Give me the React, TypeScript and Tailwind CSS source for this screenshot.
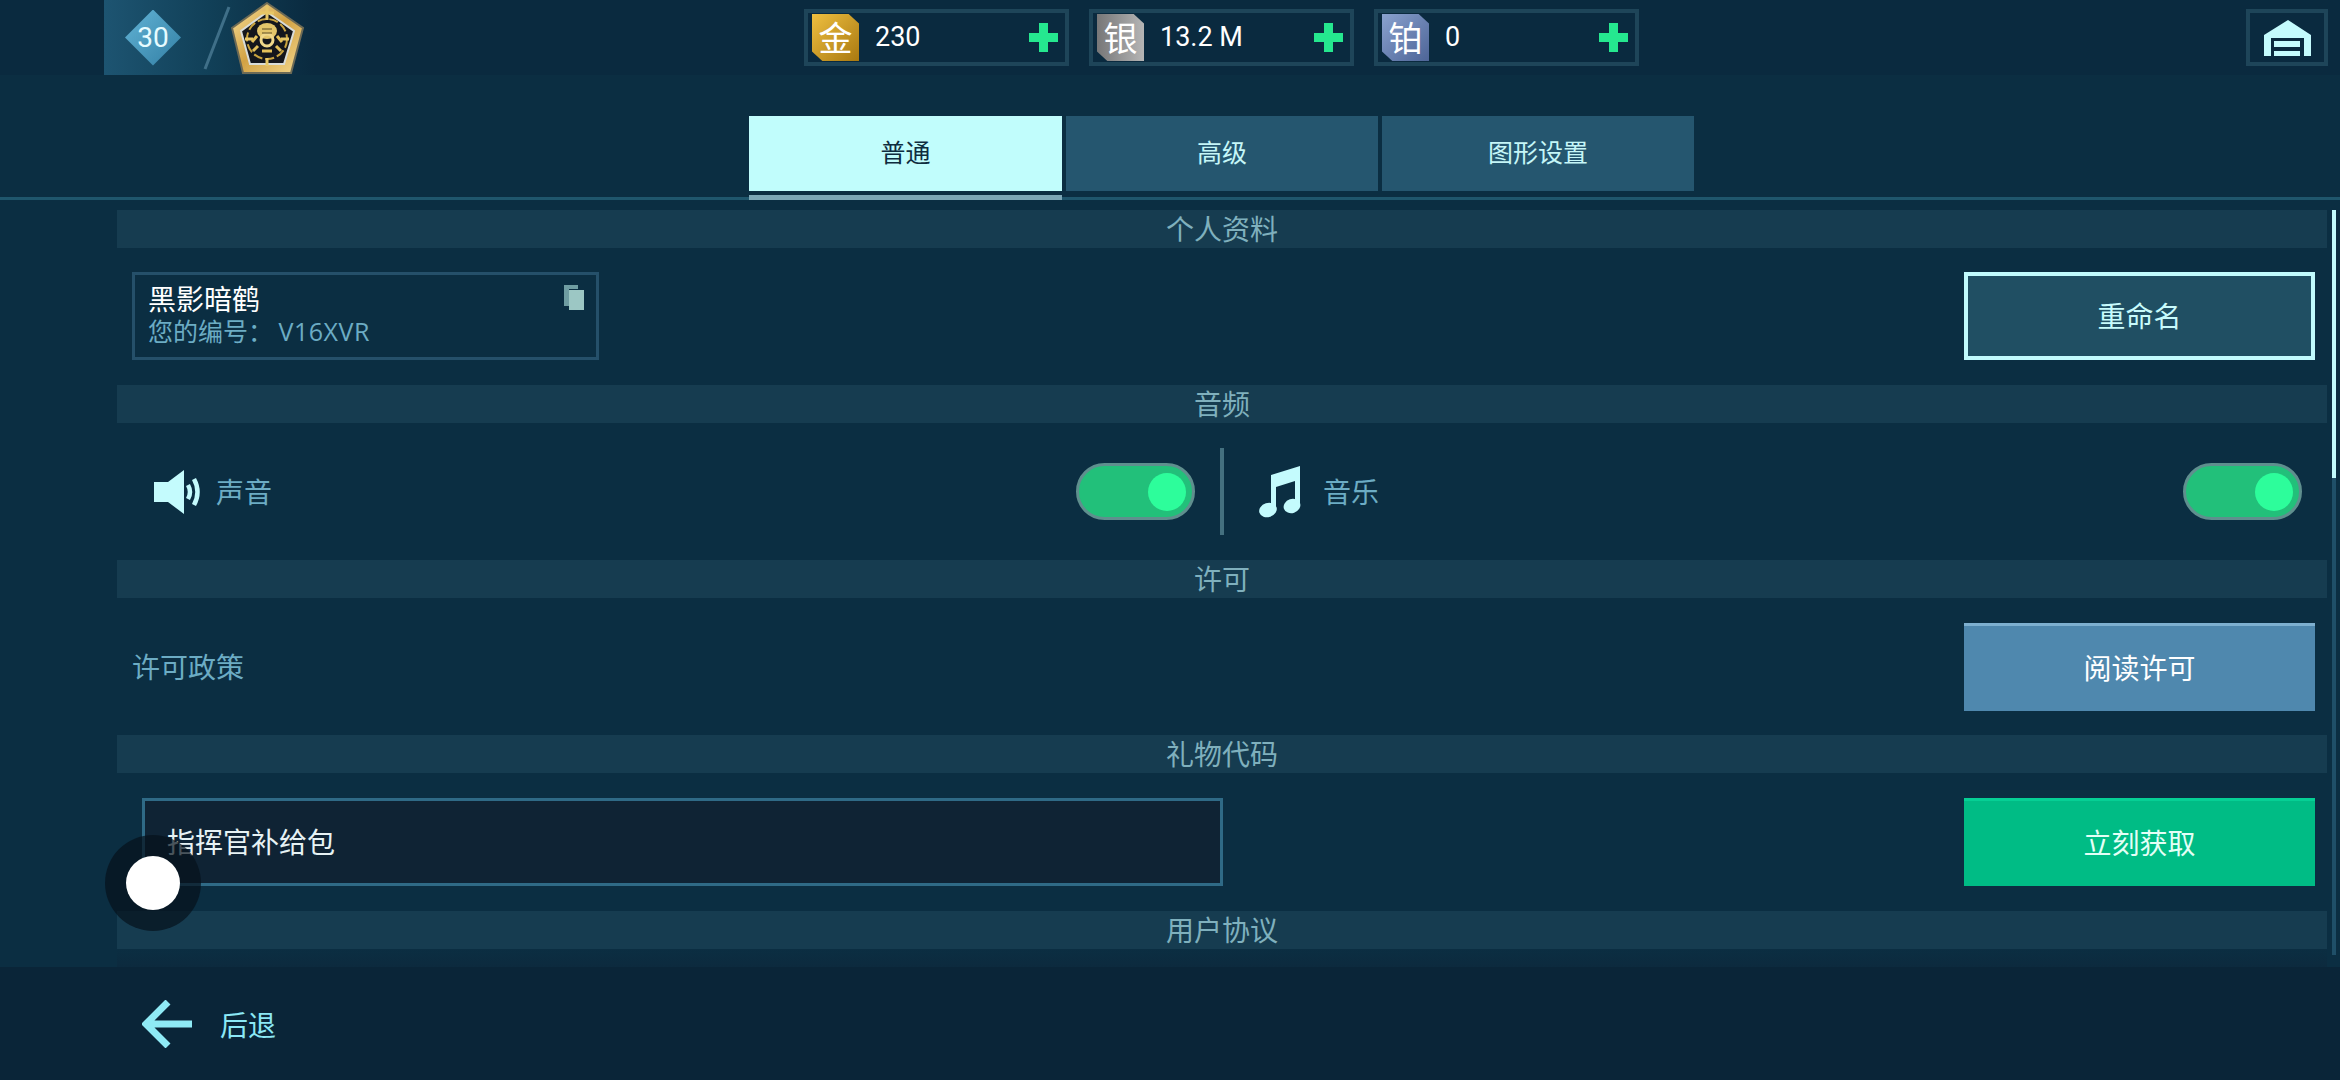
import type { ReactNode } from 'react';

const cjk = "font-['Noto_Sans_CJK_SC','Noto_Sans',sans-serif]";

function Medal() {
  return (
    <svg width="74" height="72" viewBox="0 0 74 72" className="shrink-0">
      <defs>
        <linearGradient id="gold" x1="0" y1="0" x2="1" y2="1">
          <stop offset="0" stopColor="#f8e09a" />
          <stop offset="0.5" stopColor="#d2a244" />
          <stop offset="1" stopColor="#f4d98f" />
        </linearGradient>
      </defs>
      <polygon points="36,1 72,26 60,71 12,71 1,26" fill="url(#gold)" stroke="#6d6a55" strokeWidth="2" />
      <polygon points="36,10 63,29 53,62 19,62 10,29" fill="#14161c" stroke="#d9dcd8" strokeWidth="2" />
      <circle cx="36" cy="37" r="20" fill="none" stroke="#c9a33f" strokeWidth="2" strokeDasharray="9 3" />
      <path d="M36 4v14M36 56v8M14 37h8M50 37h8M29 11h14" stroke="#e7c766" strokeWidth="3" />
      <ellipse cx="36" cy="29" rx="10" ry="8" fill="#e3c56a" />
      <circle cx="36" cy="38" r="6" fill="none" stroke="#f0d88a" strokeWidth="3" />
      <path d="M26 34l-5 6M46 34l5 6M27 44l-5 5M45 44l5 5M31 49h10" stroke="#e3c05a" strokeWidth="3" />
      <path d="M31 27h10M31 31h10" stroke="#5a4a20" strokeWidth="1" />
    </svg>
  );
}

function CurrencyBox({ glyph, value, chip }: { glyph: string; value: string; chip: string }) {
  return (
    <div className="flex h-[57px] w-[265px] items-center border-[4px] border-[#1e4559] bg-[#0a2a3f] pl-[4px] pr-[7px]">
      <div className={`flex h-[47px] w-[47px] items-center justify-center pb-[2px] text-[34px] leading-none text-white [clip-path:polygon(0_0,78%_0,100%_20%,100%_100%,22%_100%,0_80%)] ${chip} ${cjk}`}>
        {glyph}
      </div>
      <span className="ml-[16px] font-['Roboto',sans-serif] text-[27px] font-normal text-white">{value}</span>
      <svg width="29" height="29" viewBox="0 0 29 29" className="ml-auto">
        <path d="M10 0h9v10h10v9H19v10h-9V19H0v-9h10z" fill="#25e88f" />
      </svg>
    </div>
  );
}

function SectionTitle({ children }: { children: ReactNode }) {
  return (
    <div className="flex h-[38px] items-center justify-center bg-[#163c50] pb-[2px] text-[28px] leading-none text-[#7fb0bd]">
      {children}
    </div>
  );
}

function Toggle() {
  return (
    <div className="flex h-[57px] w-[119px] items-center justify-end rounded-full border-[3px] border-[#5f8f8e] bg-[#22c07a] pr-[6px]">
      <div className="h-[38px] w-[38px] rounded-full bg-[#2dfd9b]" />
    </div>
  );
}

function ActionButton({ label, className }: { label: string; className: string }) {
  return (
    <button className={`flex h-[88px] w-[351px] shrink-0 items-center justify-center pb-[3px] text-[28px] ${className}`}>
      {label}
    </button>
  );
}

export default function App() {
  return (
    <div className={`flex h-[1080px] w-[2340px] flex-col overflow-hidden bg-[#0b2e42] ${cjk}`}>
      <header className="flex h-[75px] shrink-0 items-start bg-[#0a2a3f] pl-[104px]">
        <div className="flex h-[75px] w-[210px] items-center bg-gradient-to-r from-[#1d5471] via-[#114058] to-[#0a2a3f]">
          <div className="ml-[21px] flex h-[56px] w-[56px] shrink-0 items-center justify-center bg-gradient-to-br from-[#62b4d6] to-[#327fa4] [clip-path:polygon(50%_0,100%_50%,50%_100%,0_50%)]">
            <span className="font-['Roboto',sans-serif] text-[28px] font-normal text-[#e6fbff]">30</span>
          </div>
          <svg width="28" height="66" viewBox="0 0 28 66" className="ml-[22px] shrink-0">
            <path d="M2 64L26 2" stroke="#3f6f88" strokeWidth="3" />
          </svg>
          <Medal />
        </div>
        <div className="ml-[490px] mt-[9px] flex gap-[20px]">
          <CurrencyBox glyph="金" value="230" chip="bg-gradient-to-br from-[#efc03f] to-[#a9790f]" />
          <CurrencyBox glyph="银" value="13.2 M" chip="bg-gradient-to-r from-[#777778] to-[#b5b5b5]" />
          <CurrencyBox glyph="铂" value="0" chip="bg-gradient-to-br from-[#8aa2cf] to-[#4e6597]" />
        </div>
        <div className="ml-auto mr-[12px] mt-[9px] flex h-[57px] w-[82px] items-center justify-center border-[4px] border-[#1e4559]">
          <svg width="47" height="36" viewBox="0 0 47 36">
            <path d="M24 0L47 15v21H40V18H7v18H0V15z" fill="#c4fbfd" />
            <path d="M10 21h26v6H10zM10 31h26v5H10z" fill="#c4fbfd" />
          </svg>
        </div>
      </header>

      <nav className="relative mt-[41px] flex h-[84px] shrink-0 gap-[4px] border-b-[3px] border-[#1f566c] pl-[749px]">
        <div className="flex h-[75px] w-[313px] items-center justify-center bg-[#c1fdfc] pb-[3px] text-[25px] text-[#0e2c3e]">普通</div>
        <div className="flex h-[75px] w-[312px] items-center justify-center bg-[#25566f] pb-[3px] text-[25px] text-[#c5f6f8]">高级</div>
        <div className="flex h-[75px] w-[312px] items-center justify-center bg-[#25566f] pb-[3px] text-[25px] text-[#c5f6f8]">图形设置</div>
        <div className="absolute bottom-[-3px] left-[749px] h-[5px] w-[313px] bg-[#7ba6b5]" />
      </nav>

      <main className="relative mt-[10px] h-[757px] shrink-0 pl-[117px] pr-[13px]">
        <section className="h-[175px]">
          <SectionTitle>个人资料</SectionTitle>
          <div className="mt-[24px] flex items-start justify-between pl-[15px]">
            <div className="relative flex h-[88px] w-[467px] flex-col justify-center border-[3px] border-[#25506a] pb-[4px] pl-[13px]">
              <span className="text-[28px] leading-[33px] text-white">黑影暗鹤</span>
              <span className="text-[25px] leading-[30px] text-[#6cacc4]">
                您的编号： <span className="font-['Open_Sans',sans-serif] tracking-[0.5px]">V16XVR</span>
              </span>
              <svg width="20" height="25" viewBox="0 0 20 25" className="absolute right-[12px] top-[10px]">
                <path d="M0 0h14v4H5v17H0z" fill="#6f9da2" />
                <path d="M5 5h15v20H5z" fill="#9cc7c4" />
              </svg>
            </div>
            <ActionButton label="重命名" className="mr-[12px] border-[4px] border-[#c1fbfd] bg-[#204f63] text-[#c8fbfc]" />
          </div>
        </section>

        <section className="h-[175px]">
          <SectionTitle>音频</SectionTitle>
          <div className="mt-[25px] flex h-[87px] items-center">
            <div className="flex w-[1103px] items-center pl-[37px] pr-[25px]">
              <svg width="47" height="44" viewBox="0 0 47 44">
                <path d="M0 12h14L30 0v44L14 32H0z" fill="#c4fbfd" />
                <path d="M34 15q4 7 0 14M40 9q7 13 0 26" fill="none" stroke="#c4fbfd" strokeWidth="4.5" />
              </svg>
              <span className="ml-[15px] pb-[2px] text-[28px] text-[#6cacc4]">声音</span>
              <div className="ml-auto"><Toggle /></div>
            </div>
            <div className="h-[87px] w-[4px] shrink-0 bg-[#44707f]" />
            <div className="flex flex-1 items-center pl-[35px] pr-[25px]">
              <svg width="42" height="52" viewBox="0 0 42 52">
                <path d="M12 9L41 0v40h-5V15l-19 6v23h-5z" fill="#c4fbfd" />
                <ellipse cx="9" cy="44" rx="9" ry="7" fill="#c4fbfd" transform="rotate(-18 9 44)" />
                <ellipse cx="33" cy="40" rx="8.5" ry="7" fill="#c4fbfd" transform="rotate(-18 33 40)" />
              </svg>
              <span className="ml-[22px] pb-[2px] text-[28px] text-[#6cacc4]">音乐</span>
              <div className="ml-auto"><Toggle /></div>
            </div>
          </div>
        </section>

        <section className="h-[175px]">
          <SectionTitle>许可</SectionTitle>
          <div className="mt-[25px] flex items-center justify-between pl-[15px]">
            <span className="pb-[2px] text-[28px] text-[#6cacc4]">许可政策</span>
            <ActionButton label="阅读许可" className="mr-[12px] border-t-[3px] border-[#7eb0d0] bg-[#4f88ae] text-white" />
          </div>
        </section>

        <section className="h-[176px]">
          <SectionTitle>礼物代码</SectionTitle>
          <div className="mt-[25px] flex items-center justify-between pl-[25px]">
            <div className="flex h-[88px] w-[1081px] items-center border-[3px] border-[#2f6a86] bg-[#0f2334] pb-[2px] pl-[22px] text-[28px] text-[#e6f2f4]">
              指挥官补给包
            </div>
            <ActionButton label="立刻获取" className="mr-[12px] border-t-[3px] border-[#06cf95] bg-[#00bc85] text-[#e4fff6]" />
          </div>
        </section>

        <SectionTitle>用户协议</SectionTitle>
        <div className="h-[18px] bg-gradient-to-b from-[#0b2e42] to-[#0c2a3e]" />

        {/* scrollbar */}
        <div className="absolute right-[4px] top-0 h-[745px] w-[4px] bg-[#1f4f68]">
          <div className="h-[268px] bg-[#c1fbfd]" />
        </div>
      </main>

      <footer className="flex flex-1 items-center bg-[#0a2538] pl-[142px]">
        <svg width="50" height="48" viewBox="0 0 50 48">
          <path d="M50 24H4M26 2L4 24l22 22" fill="none" stroke="#8feaf5" strokeWidth="7" />
        </svg>
        <span className="ml-[28px] text-[28px] text-[#8be8f5]">后退</span>
      </footer>

      {/* floating assistive button */}
      <div className="fixed left-[105px] top-[835px] flex h-[96px] w-[96px] items-center justify-center rounded-full bg-[#05111b]/70">
        <div className="h-[54px] w-[54px] rounded-full bg-white" />
      </div>
    </div>
  );
}
